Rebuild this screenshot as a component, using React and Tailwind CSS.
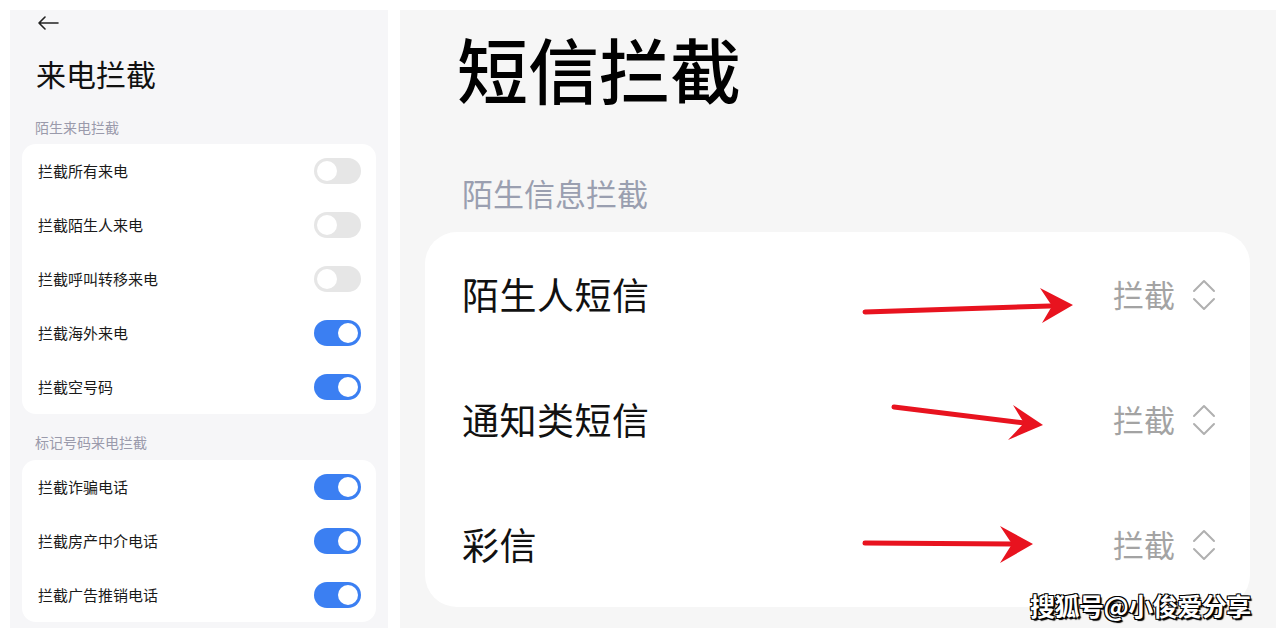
import React from 'react';

const font = { fontFamily: '"Noto Sans CJK SC", "Noto Sans", sans-serif' };

function Toggle({ on }) {
  return (
    <div
      className={`w-[47px] h-[26px] rounded-full flex items-center px-[3px] ${
        on ? 'bg-[#3b7ff2] justify-end' : 'bg-[#e6e6e6] justify-start'
      }`}
    >
      <div className="w-[20px] h-[20px] rounded-full bg-white" />
    </div>
  );
}

function Row({ label, on }) {
  return (
    <div className="h-[54px] flex items-center justify-between pl-4 pr-[15px]">
      <span className="text-[15px] text-[#1a1a1a]">{label}</span>
      <Toggle on={on} />
    </div>
  );
}

function UpDown() {
  return (
    <svg width="26" height="38" viewBox="0 0 26 38" fill="none" stroke="#b0b0b0" strokeWidth="2" strokeLinecap="round" strokeLinejoin="round">
      <path d="M3 15 L13 5 L23 15" />
      <path d="M3 23 L13 33 L23 23" />
    </svg>
  );
}

function SmsRow({ label }) {
  return (
    <div className="h-[125px] flex items-center justify-between pl-[37px] pr-[33px]">
      <span className="text-[37px] text-[#111] tracking-[0.5px]">{label}</span>
      <div className="flex items-center gap-[16px]">
        <span className="text-[31px] text-[#a3a3a3]">拦截</span>
        <UpDown />
      </div>
    </div>
  );
}

export default function App() {
  const group1 = [
    ['拦截所有来电', false],
    ['拦截陌生人来电', false],
    ['拦截呼叫转移来电', false],
    ['拦截海外来电', true],
    ['拦截空号码', true],
  ];
  const group2 = [
    ['拦截诈骗电话', true],
    ['拦截房产中介电话', true],
    ['拦截广告推销电话', true],
  ];

  return (
    <div className="relative w-[1286px] h-[639px] bg-white flex gap-3 pt-[10px] px-[10px] overflow-hidden" style={font}>
      {/* left: phone call blocking */}
      <div className="w-[378px] h-[618px] bg-[#f6f6f8] flex flex-col">
        <div className="h-[26px] pl-[27px] flex items-center">
          <svg width="22" height="14" viewBox="0 0 22 14" fill="none" stroke="#222" strokeWidth="1.6" strokeLinecap="round" strokeLinejoin="round">
            <path d="M21 7 H2 M8 1 L2 7 L8 13" />
          </svg>
        </div>
        <div className="h-[74px] pl-[26px] flex items-center">
          <h1 className="text-[30px] text-[#111] leading-none">来电拦截</h1>
        </div>
        <div className="h-[34px] pl-[25px] flex items-center text-[14px] text-[#9a9aab]">陌生来电拦截</div>
        <div className="mx-3 bg-white rounded-[14px]">
          {group1.map(([l, on]) => (
            <Row key={l} label={l} on={on} />
          ))}
        </div>
        <div className="h-[46px] pl-[25px] pt-[10px] flex items-center text-[14px] text-[#9a9aab]">标记号码来电拦截</div>
        <div className="mx-3 bg-white rounded-[14px]">
          {group2.map(([l, on]) => (
            <Row key={l} label={l} on={on} />
          ))}
        </div>
      </div>

      {/* right: sms blocking */}
      <div className="relative w-[876px] h-[618px] bg-[#f6f6f6] flex flex-col">
        <div className="h-[115px] pl-[57px] flex items-center">
          <h1 className="text-[71px] leading-none text-black font-medium">短信拦截</h1>
        </div>
        <div className="h-[107px] pl-[62px] pt-[29px] flex items-center text-[31px] text-[#9a9fb0]">陌生信息拦截</div>
        <div className="ml-[25px] mr-[26px] bg-white rounded-[32px]">
          <SmsRow label="陌生人短信" />
          <SmsRow label="通知类短信" />
          <SmsRow label="彩信" />
        </div>
      </div>

      {/* red annotation arrows */}
      <svg className="absolute left-0 top-0 pointer-events-none" width="1286" height="639" viewBox="0 0 1286 639">
        <g stroke="#e8131f" strokeWidth="5" strokeLinecap="round" fill="#e8131f">
          <path d="M865 312 L1050 306" />
          <path d="M894 407 L1025 423" />
          <path d="M865 543 L1012 544" />
        </g>
        <g fill="#e8131f">
          <path d="M1040 288 L1073 305 L1042 323 L1052 306 Z" />
          <path d="M1013 405 L1043 425 L1008 440 L1024 423 Z" />
          <path d="M1000 526 L1033 544 L1000 563 L1012 544 Z" />
        </g>
      </svg>

      {/* watermark */}
      <div
        className="absolute left-[1030px] top-[593px] text-[25px] font-semibold text-white leading-none tracking-[-0.5px]"
        style={{ textShadow: '1px 1px 0 #000, -1px -1px 0 #000, 1px -1px 0 #000, -1px 1px 0 #000, 2px 2px 1px #000' }}
      >
        搜狐号@小俊爱分享
      </div>
    </div>
  );
}
